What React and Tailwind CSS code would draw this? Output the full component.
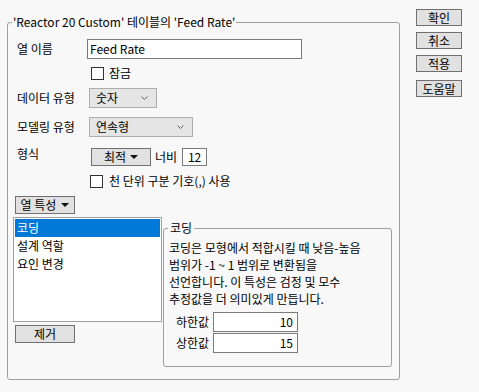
import React from "react";

const Chevron = () => (
  <svg width="7" height="4" viewBox="0 0 7 4" className="block">
    <polyline points="0.5,0.5 3.5,3.5 6.5,0.5" fill="none" stroke="#606060" strokeWidth="1" />
  </svg>
);

const Tri = () => (
  <svg width="8" height="4" viewBox="0 0 8 4" className="block">
    <polygon points="0,0 8,0 4,4" fill="#111" />
  </svg>
);

const Check = () => (
  <div className="w-[13px] h-[13px] border border-[#333] bg-white shrink-0" />
);

const SideBtn = ({ children, extra = "" }) => (
  <div
    className={`w-[46px] h-[17px] border border-[#707070] bg-[#e1e1e1] flex items-center justify-center leading-[15px] ${extra}`}
  >
    {children}
  </div>
);

export default function App() {
  return (
    <div className="w-[479px] h-[392px] bg-[#f8f8f8] flex font-['Noto_Sans_CJK_KR',sans-serif] text-[12px] text-black">
      <div className="pl-[7px] pt-[14px]">
        <fieldset className="w-[393px] h-[366px] border border-[#a0a0a0] rounded-[3px] min-w-0">
          <legend className="ml-[4px] px-[1px] leading-[16px] text-[12px]">
            'Reactor 20 Custom' 테이블의 'Feed Rate'
          </legend>
          <div className="flex flex-col pl-[5px]">
            {/* Row 1 */}
            <div className="mt-[9px] h-[20px] flex items-center">
              <div className="w-[74px] pl-[4px] leading-[16px]">열 이름</div>
              <div className="w-[215px] h-[20px] border border-[#7a7a7a] bg-white pl-[2px] leading-[18px]">
                Feed Rate
              </div>
            </div>
            {/* Row 2 */}
            <div className="mt-[4px] h-[20px] flex items-center ml-[78px] gap-[5px]">
              <Check />
              <span className="leading-[16px]">잠금</span>
            </div>
            {/* Row 3 */}
            <div className="mt-[5px] h-[20px] flex items-center">
              <div className="w-[76px] pl-[4px] leading-[16px]">데이터 유형</div>
              <div className="w-[68px] h-[20px] border border-[#adadad] bg-[#e5e5e5] flex items-center justify-between pl-[6px] pr-[8px]">
                <span className="leading-[16px]">숫자</span>
                <Chevron />
              </div>
            </div>
            {/* Row 4 */}
            <div className="mt-[9px] h-[20px] flex items-center">
              <div className="w-[76px] pl-[4px] leading-[16px]">모델링 유형</div>
              <div className="w-[104px] h-[20px] border border-[#adadad] bg-[#e5e5e5] flex items-center justify-between pl-[6px] pr-[8px]">
                <span className="leading-[16px]">연속형</span>
                <Chevron />
              </div>
            </div>
            {/* Row 5 */}
            <div className="mt-[11px] h-[18px] flex items-start">
              <div className="w-[78px] pl-[4px] leading-[11px]">형식</div>
              <div className="w-[60px] h-[18px] border border-[#707070] bg-[#e1e1e1] flex items-center justify-center gap-[4px]">
                <span className="leading-[16px]">최적</span>
                <Tri />
              </div>
              <span className="ml-[4px] leading-[18px]">너비</span>
              <div className="ml-[5px] w-[25px] h-[18px] border border-[#7a7a7a] bg-white flex items-center justify-center leading-[16px]">
                12
              </div>
            </div>
            {/* Row 6 */}
            <div className="mt-[5px] h-[20px] flex items-center ml-[77px] gap-[6px]">
              <Check />
              <span className="leading-[16px]">천 단위 구분 기호(,) 사용</span>
            </div>
            {/* 열 특성 */}
            <div className="mt-[5px] ml-[2px] w-[60px] h-[18px] border border-[#707070] bg-[#e1e1e1] flex items-center justify-center gap-[5px]">
              <span className="leading-[16px]">열 특성</span>
              <Tri />
            </div>
            {/* Bottom area */}
            <div className="mt-[3px] flex items-start">
              <div className="flex flex-col">
                <div className="w-[149px] h-[105px] border border-[#a0a0a0] bg-white p-[1px] flex flex-col">
                  <div className="h-[18px] bg-[#0078d7] text-white pl-[2px] leading-[18px]">코딩</div>
                  <div className="h-[18px] pl-[2px] leading-[18px]">설계 역할</div>
                  <div className="h-[18px] pl-[2px] leading-[18px]">요인 변경</div>
                </div>
                <div className="mt-[3px] ml-[2px] w-[60px] h-[18px] border border-[#707070] bg-[#e1e1e1] flex items-center justify-center leading-[16px]">
                  제거
                </div>
              </div>
              <fieldset className="ml-[1px] mt-[3px] w-[229px] h-[147px] border border-[#a0a0a0] rounded-[3px] min-w-0">
                <legend className="ml-[4px] px-[2px] leading-[16px]">코딩</legend>
                <div className="pl-[5px] mt-[3px] leading-[17px] whitespace-nowrap">
                  <div>코딩은 모형에서 적합시킬 때 낮음-높음</div>
                  <div>범위가 -1 ~ 1 범위로 변환됨을</div>
                  <div>선언합니다. 이 특성은 검정 및 모수</div>
                  <div>추정값을 더 의미있게 만듭니다.</div>
                </div>
                <div className="mt-[5px] h-[20px] flex items-center">
                  <div className="w-[49px] pr-[4px] text-right leading-[16px]">하한값</div>
                  <div className="w-[85px] h-[20px] border border-[#7a7a7a] bg-white text-right pr-[4px] leading-[18px]">
                    10
                  </div>
                </div>
                <div className="mt-[1px] h-[20px] flex items-center">
                  <div className="w-[49px] pr-[4px] text-right leading-[16px]">상한값</div>
                  <div className="w-[85px] h-[20px] border border-[#7a7a7a] bg-white text-right pr-[4px] leading-[18px]">
                    15
                  </div>
                </div>
              </fieldset>
            </div>
          </div>
        </fieldset>
      </div>
      <div className="ml-[16px] pt-[9px] flex flex-col">
        <SideBtn>확인</SideBtn>
        <SideBtn extra="mt-[6px]">취소</SideBtn>
        <SideBtn extra="mt-[6px]">적용</SideBtn>
        <SideBtn extra="mt-[8px]">도움말</SideBtn>
      </div>
    </div>
  );
}
